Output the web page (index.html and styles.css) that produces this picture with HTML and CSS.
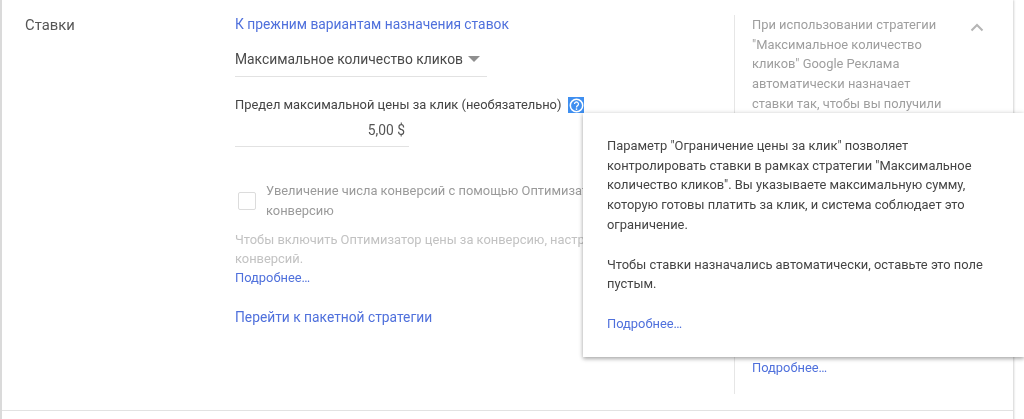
FILE: index.html
```html
<!DOCTYPE html>
<html lang="ru">
<head>
<meta charset="utf-8">
<title>Ставки</title>
<link rel="stylesheet" href="styles.css">
</head>
<body>
<div class="viewport">
  <section class="card">
    <div class="row">
      <h2 class="label">Ставки</h2>
      <div class="main">
        <a class="link first" href="#">К прежним вариантам назначения ставок</a>
        <div class="select"><span>Максимальное количество кликов</span><i class="caret"></i></div>
        <div class="limit-label"><span>Предел максимальной цены за клик (необязательно)</span>
          <span class="help"><svg viewBox="0 0 16 16" width="15" height="15"><circle cx="8" cy="8" r="6.6" fill="none" stroke="#fff" stroke-width="1.6"/><path d="M5.9 6.4a2.1 2.1 0 1 1 3.3 1.7c-.8.6-1.2 1-1.2 1.9" fill="none" stroke="#fff" stroke-width="1.4"/><circle cx="8" cy="11.8" r=".9" fill="#fff"/></svg></span>
        </div>
        <div class="amount">5,00 $</div>
        <div class="opt">
          <span class="checkbox"></span>
          <span class="opt-text">Увеличение числа конверсий с помощью Оптимизатора цены за конверсию</span>
        </div>
        <p class="hint">Чтобы включить Оптимизатор цены за конверсию, настройте отслеживание конверсий.</p>
        <a class="link small" href="#">Подробнее…</a>
        <a class="link batch" href="#">Перейти к пакетной стратегии</a>
      </div>
      <aside class="side">
        <p class="side-text">При использовании стратегии "Максимальное количество кликов" Google Реклама автоматически назначает ставки так, чтобы вы получили</p>
        <a class="link small" href="#">Подробнее…</a>
      </aside>
      <div class="chev"><svg viewBox="0 0 14 9" width="14" height="9"><path d="M1.5 7.5 7 2l5.5 5.5" fill="none" stroke="#b5b5b5" stroke-width="2"/></svg></div>
    </div>
  </section>
  <div class="popup">
    <p>Параметр "Ограничение цены за клик" позволяет контролировать ставки в рамках стратегии "Максимальное количество кликов". Вы указываете максимальную сумму, которую готовы платить за клик, и система соблюдает это ограничение.</p>
    <p>Чтобы ставки назначались автоматически, оставьте это поле пустым.</p>
    <a class="link small" href="#">Подробнее…</a>
  </div>
</div>
</body>
</html>
```
FILE: styles.css
```css
html, body { margin: 0; padding: 0; background: #fff; }
body { font-family: Roboto, "Noto Sans", sans-serif; color: #444; }
.viewport { position: relative; width: 1024px; height: 419px; overflow: hidden; background: #fff; filter: blur(0.4px); }
.card { width: 1011px; height: 430px; margin-left: 2px; box-sizing: border-box; box-shadow: -2px 0 0 #dadada, 1px 0 2px #d4d4d4; background: #fff; }
.row { display: flex; height: 411px; box-sizing: border-box; border-bottom: 1px solid #e2e2e2; }
.label { margin: 15px 0 0 23px; width: 210px; font-size: 14.8px; line-height: 20px; font-weight: 400; color: #555; }
.main { width: 499px; display: flex; flex-direction: column; align-items: flex-start; padding-top: 14px; overflow: hidden; flex: none; }
.link { color: #4f70dc; text-decoration: none; }
.first { font-size: 13.8px; line-height: 20px; }
.select { width: 252px; height: 42px; margin-top: 1px; padding-top: 6px; display: flex; align-items: center; box-sizing: border-box; border-bottom: 1px solid #e2e2e2; font-size: 13.85px; color: #4a4a4a; }
.caret { margin-left: 5px; border: 6px solid transparent; border-top-color: #8f8f8f; border-bottom: 0; }
.limit-label { display: flex; align-items: center; margin-top: 18px; font-size: 12.9px; line-height: 20px; color: #444; white-space: nowrap; }
.help { width: 16px; height: 16px; margin-left: 7px; background: #3f8ff0; display: flex; align-items: center; justify-content: center; }
.amount { width: 174px; height: 32px; box-sizing: border-box; padding: 5px 4px 0 0; text-align: right; font-size: 13.8px; line-height: 20px; border-bottom: 1px solid #e2e2e2; color: #555; }
.opt { display: flex; align-items: center; margin-top: 34px; margin-left: 3px; }
.checkbox { width: 16px; height: 16px; border: 1.5px solid #dcdcdc; border-radius: 2px; flex: none; }
.opt-text { width: 450px; margin-left: 10px; font-size: 12.9px; line-height: 20px; color: #9a9a9a; }
.hint { width: 480px; margin: 9px 0 0; font-size: 12.9px; line-height: 19px; color: #c2c2c2; }
.small { font-size: 12.9px; line-height: 20px; }
.batch { font-size: 13.8px; line-height: 20px; margin-top: 19px; }
.side { width: 216px; flex: none; box-sizing: border-box; margin-top: 15px; margin-bottom: 16px; border-left: 1px solid #e6e6e6; padding-left: 17px; display: flex; flex-direction: column; justify-content: space-between; align-items: flex-start; }
.side-text { margin: 0; font-size: 12.9px; line-height: 19.7px; color: #9e9e9e; }
.side .small { margin-bottom: 16px; }
.chev { padding: 17px 0 0 20px; }
.popup { position: absolute; left: 583px; top: 113px; width: 441px; height: 244px; box-sizing: border-box; padding: 23px 24px 0; background: #fff; box-shadow: 0 2px 4px rgba(0,0,0,.28), 0 0 5px rgba(0,0,0,.12); font-size: 12.9px; line-height: 19.7px; color: #444; }
.popup p { margin: 0 0 20px; width: 385px; }
.popup p:first-child { width: 375px; }
.popup .small { display: block; margin-top: 19px; }
```
